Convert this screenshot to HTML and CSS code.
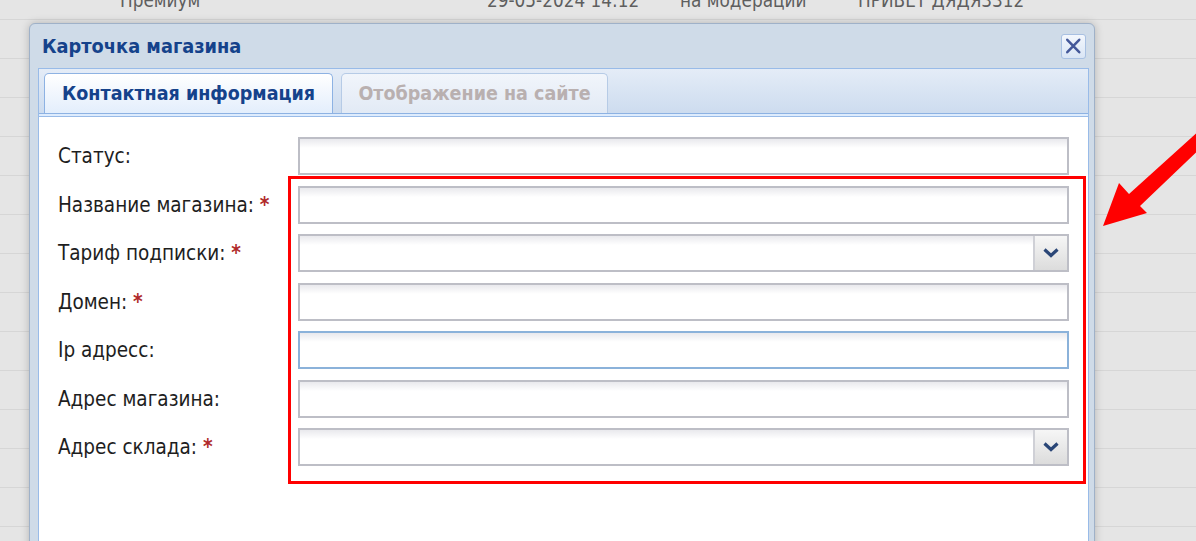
FILE: index.html
```html
<!DOCTYPE html>
<html lang="ru">
<head>
<meta charset="utf-8">
<title>Карточка магазина</title>
<link rel="stylesheet" href="styles.css">
</head>
<body>
<div class="grid">
  <div class="grid-row">
    <span>Премиум</span><span>29-05-2024 14:12</span><span>на модерации</span><span>ПРИВЕТ ДЯДЯ3312</span>
  </div>
  <div class="grid-row"></div><div class="grid-row"></div><div class="grid-row"></div>
  <div class="grid-row"></div><div class="grid-row"></div><div class="grid-row"></div>
  <div class="grid-row"></div><div class="grid-row"></div><div class="grid-row"></div>
  <div class="grid-row"></div><div class="grid-row"></div><div class="grid-row"></div>
  <div class="grid-row"></div><div class="grid-row"></div>
</div>

<div class="window">
  <div class="win-head">
    <span class="win-title">Карточка магазина</span>
    <button class="win-close" type="button" aria-label="Закрыть">
      <svg width="24" height="24" viewBox="0 0 24 24"><path d="M5.5 5.5 L18 18.5 M18 5.5 L5.5 18.5" stroke="#44589a" stroke-width="2.6" stroke-linecap="round" fill="none"/></svg>
    </button>
  </div>
  <div class="tabpanel">
    <div class="tabstrip">
      <div class="tab tab-active">Контактная информация</div>
      <div class="tab tab-inactive">Отображение на сайте</div>
    </div>
    <div class="strip-edge"></div>
    <div class="tabbody">
      <div class="form">
        <label class="lbl">Статус:</label>
        <div class="field"></div>
        <label class="lbl">Название магазина: <span class="req">*</span></label>
        <div class="field"></div>
        <label class="lbl">Тариф подписки: <span class="req">*</span></label>
        <div class="field combo"><div class="trigger"><svg width="16" height="10" viewBox="0 0 16 10"><path d="M1.5 1.5 L8 7.5 L14.5 1.5" stroke="#2a4677" stroke-width="3.2" fill="none" stroke-linejoin="miter"/></svg></div></div>
        <label class="lbl">Домен: <span class="req">*</span></label>
        <div class="field"></div>
        <label class="lbl">Ip адресс:</label>
        <div class="field focus"></div>
        <label class="lbl">Адрес магазина:</label>
        <div class="field"></div>
        <label class="lbl">Адрес склада: <span class="req">*</span></label>
        <div class="field combo"><div class="trigger"><svg width="16" height="10" viewBox="0 0 16 10"><path d="M1.5 1.5 L8 7.5 L14.5 1.5" stroke="#2a4677" stroke-width="3.2" fill="none" stroke-linejoin="miter"/></svg></div></div>
      </div>
    </div>
  </div>
</div>

<div class="highlight"></div>
<svg class="arrow" width="1196" height="541" viewBox="0 0 1196 541">
  <polygon points="1103,226 1119,183 1129,194 1210,121 1210,139 1140,206 1147,213" fill="#ff0000"/>
</svg>
</body>
</html>
```

FILE: styles.css
```css
html, body {
  margin: 0;
  padding: 0;
}
body {
  width: 1196px;
  height: 541px;
  overflow: hidden;
  background: #e5e5e5;
  font-family: "DejaVu Sans Condensed", "DejaVu Sans", sans-serif;
  position: relative;
}

.grid {
  margin-top: -19px;
}
.grid-row {
  height: 38px;
  border-bottom: 1px solid #d6d6d6;
  display: grid;
  grid-template-columns: 367px 193px 178px 1fr;
  padding-left: 120px;
  align-items: center;
  color: #5e5e5e;
  font-size: 18.8px;
}

.window {
  position: absolute;
  left: 29px;
  top: 23px;
  width: 1064px;
  height: 540px;
  background: #cfdbe8;
  border: 1px solid #9fb1c8;
  border-radius: 6px 6px 0 0;
  box-shadow: 0 0 8px rgba(0, 0, 0, 0.22);
  display: flex;
  flex-direction: column;
}
.win-head {
  height: 44px;
  display: flex;
  align-items: center;
  justify-content: space-between;
  padding: 0 8px 0 12px;
}
.win-title {
  font-weight: bold;
  font-size: 19.8px;
  color: #15428b;
}
.win-close {
  width: 25px;
  height: 25px;
  padding: 0;
  border: 1px solid #a8c0e2;
  border-radius: 3px;
  background: linear-gradient(#f3f7fd, #d9e5f5);
  display: flex;
  align-items: center;
  justify-content: center;
}

.tabpanel {
  flex: 1;
  margin: 0 5px 0 8px;
  border: 1px solid #99bbe8;
  border-bottom: none;
  background: #fff;
  display: flex;
  flex-direction: column;
}
.tabstrip {
  height: 41px;
  padding: 3px 0 0 5px;
  background: linear-gradient(#e4ecf7, #cddcef);
  display: flex;
  gap: 8px;
  align-items: flex-end;
}
.tab {
  height: 40px;
  box-sizing: border-box;
  border-radius: 5px 5px 0 0;
  font-weight: bold;
  font-size: 19.5px;
  display: flex;
  align-items: center;
  justify-content: center;
}
.tab-active {
  width: 289px;
  border: 1px solid #8db2e3;
  border-bottom: none;
  background: linear-gradient(#ffffff, #e3eefc);
  color: #15428b;
}
.tab-inactive {
  width: 267px;
  border: 1px solid #b6cbe6;
  border-bottom: none;
  background: linear-gradient(#f1f5fb, #e2eaf5);
  color: #b9b0b0;
}
.strip-edge {
  height: 2px;
  border-top: 1px solid #8db2e3;
  border-bottom: 1px solid #99bbe8;
  background: #deecfd;
}

.tabbody {
  flex: 1;
  padding: 20px 19px 0 19px;
}
.form {
  display: grid;
  grid-template-columns: 240px 1fr;
  grid-auto-rows: 38px;
  row-gap: 10.5px;
  align-items: center;
}
.lbl {
  font-size: 20.5px;
  color: #1e1e1e;
}
.req {
  color: #b02a2a;
  font-weight: bold;
}
.field {
  height: 38px;
  box-sizing: border-box;
  border: 2px solid #bdbec6;
  background: linear-gradient(#e9e9ed, #ffffff 9px);
  display: flex;
  justify-content: flex-end;
}
.field.focus {
  border-color: #8bb2da;
}
.trigger {
  width: 32px;
  border-left: 2px solid #cfd0d6;
  background: linear-gradient(#f6f6f6, #dcdcdc);
  display: flex;
  align-items: center;
  justify-content: center;
}

.highlight {
  position: absolute;
  left: 288px;
  top: 176px;
  width: 792px;
  height: 302px;
  border: 3px solid #ff0000;
}
.arrow {
  position: absolute;
  left: 0;
  top: 0;
  pointer-events: none;
}
```
